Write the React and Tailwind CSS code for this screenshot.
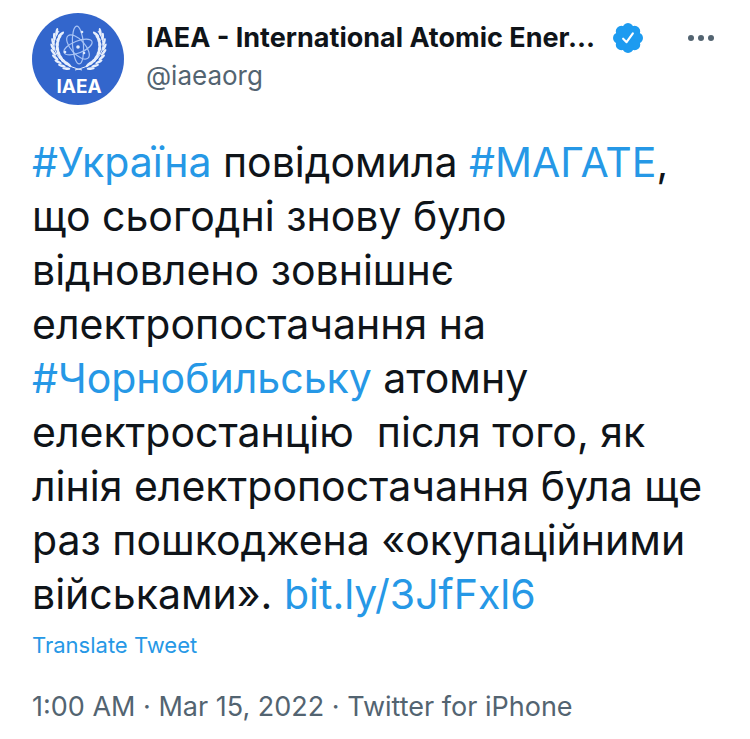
import React from "react";

const tweet = {
  name: "IAEA - International Atomic Ener...",
  handle: "@iaeaorg",
  time: "1:00 AM",
  date: "Mar 15, 2022",
  source: "Twitter for iPhone",
};

// angles (degrees) of the leaf pairs along one laurel branch
const leafAngles = [112, 124, 136, 148, 160, 172, 184, 196, 208];

const Laurel = () => (
  <g>
    <path
      d="M50 57 C36 54 24 47 22 33 C22 28 23 24 27 18"
      fill="none"
      stroke="#e8effc"
      strokeWidth="1"
    />
    {leafAngles.map((angle) => {
      const rad = (angle * Math.PI) / 180;
      const x = 46 + 23 * Math.cos(rad);
      const y = 33 + 23 * Math.sin(rad);
      return (
        <g key={angle} transform={`translate(${x} ${y}) rotate(${angle + 90})`}>
          <ellipse cx="3" cy="-1.5" rx="4" ry="1.3" transform="rotate(-18)" />
          <ellipse cx="3" cy="1.5" rx="4" ry="1.3" transform="rotate(20)" />
        </g>
      );
    })}
  </g>
);

const Avatar = () => (
  <svg
    viewBox="0 0 92 92"
    className="size-23 shrink-0"
    role="img"
    aria-label="IAEA"
  >
    <circle cx="46" cy="46" r="46" fill="#3366cc" />
    <g fill="#e8effc">
      <Laurel />
      <g transform="translate(93 0) scale(-1 1)">
        <Laurel />
      </g>
    </g>
    <g fill="none" stroke="#a9c4f5" strokeWidth="1.2">
      <ellipse cx="46" cy="32" rx="5.5" ry="19" transform="rotate(-4 46 32)" />
      <ellipse cx="46" cy="34" rx="6" ry="15" transform="rotate(68 46 34)" />
      <ellipse cx="46" cy="34" rx="7" ry="15" transform="rotate(-42 46 34)" />
    </g>
    <g fill="#dfe9fb">
      <circle cx="46" cy="34" r="1.8" />
      <circle cx="50" cy="19" r="1.3" />
      <circle cx="33" cy="39" r="1.3" />
      <circle cx="52" cy="40" r="1.3" />
    </g>
    <text
      x="47"
      y="80"
      textAnchor="middle"
      fill="#ffffff"
      className="font-['Inter',sans-serif] text-[19px] font-bold"
    >
      IAEA
    </text>
  </svg>
);

const VerifiedBadge = () => (
  <svg
    viewBox="1.5 1.5 21 21"
    className="size-[30px] shrink-0"
    role="img"
    aria-label="Verified account"
  >
    <g fill="#1d9bf0">
      <circle cx="12" cy="12" r="9" />
      {[0, 45, 90, 135, 180, 225, 270, 315].map((angle) => (
        <circle
          key={angle}
          cx="12"
          cy="5.4"
          r="3.9"
          transform={`rotate(${angle} 12 12)`}
        />
      ))}
    </g>
    <path
      d="M8.6 12.5 L11 14.9 L15.4 8.8"
      fill="none"
      stroke="#ffffff"
      strokeWidth="1.5"
      strokeLinecap="round"
      strokeLinejoin="round"
    />
  </svg>
);

const TweetLink = ({ children }) => (
  <a href="#" className="text-[#2698e6] hover:underline">
    {children}
  </a>
);

const App = () => {
  return (
    <article className="bg-white px-8 pt-[13px] pb-3 font-['Inter',sans-serif] text-[#0f1419]">
      <header className="flex items-start">
        <Avatar />
        <div className="ml-[22px] min-w-0 pt-[5px]">
          <div className="flex items-center gap-[18px]">
            <h1 className="truncate text-[27px] leading-10 font-bold">
              {tweet.name}
            </h1>
            <VerifiedBadge />
          </div>
          <p className="text-[26px] leading-9 text-[#536471]">{tweet.handle}</p>
        </div>
        <button
          type="button"
          aria-label="More"
          className="ml-auto flex h-[50px] items-center"
        >
          <svg viewBox="0 0 30 8" className="h-2 w-[30px]" fill="#536471">
            <circle cx="3" cy="4" r="3" />
            <circle cx="13" cy="4" r="3" />
            <circle cx="23" cy="4" r="3" />
          </svg>
        </button>
      </header>

      <p className="mt-[30px] text-[41px] leading-[54px] whitespace-pre-wrap">
        <TweetLink>#Україна</TweetLink> повідомила{" "}
        <TweetLink>#МАГАТЕ</TweetLink>, що сьогодні знову було відновлено
        зовнішнє електропостачання на <TweetLink>#Чорнобильську</TweetLink>{" "}
        атомну електростанцію{"  "}після того, як лінія електропостачання була
        ще раз пошкоджена «окупаційними військами».{" "}
        <TweetLink>bit.ly/3JfFxl6</TweetLink>
      </p>

      <button
        type="button"
        className="mt-2 block text-[22px] leading-8 text-[#2698e6]"
      >
        Translate Tweet
      </button>

      <p className="mt-7 text-[27px] leading-9 text-[#536471]">
        {tweet.time} · {tweet.date} · {tweet.source}
      </p>
    </article>
  );
};

export default App;
